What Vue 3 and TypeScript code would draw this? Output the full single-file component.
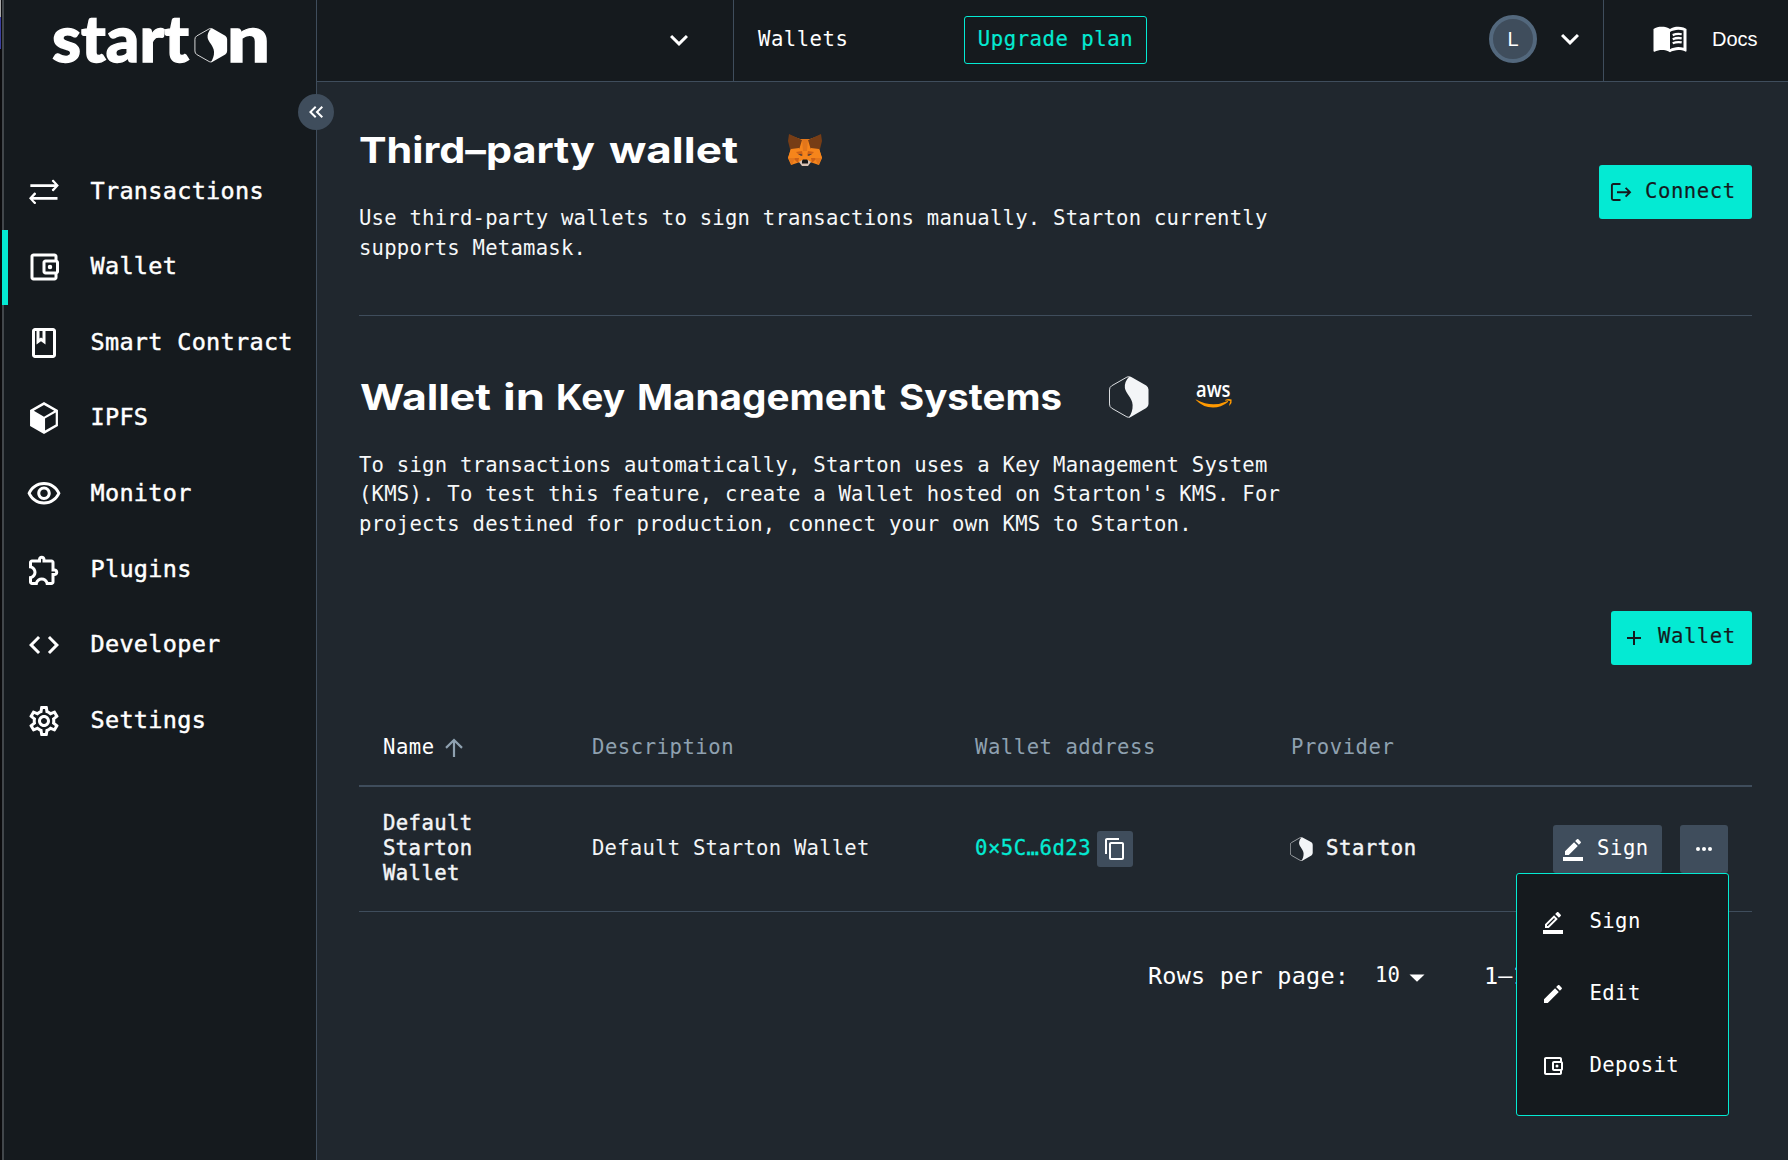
<script setup lang="ts">
interface NavItem {
  label: string
  paths: string[]
  active?: boolean
}

interface Word {
  text: string
  x: number
  width: number
}

const walletPath =
  'M21 7.28V5c0-1.1-.9-2-2-2H5c-1.11 0-2 .9-2 2v14c0 1.1.89 2 2 2h14c1.1 0 2-.9 2-2v-2.28c.59-.35 1-.98 1-1.72V9c0-.74-.41-1.37-1-1.72zM20 9v6h-7V9h7zM5 19V5h14v2h-6c-1.1 0-2 .9-2 2v6c0 1.1.9 2 2 2h6v2H5z'
const walletDot = 'M16 10.5a1.5 1.5 0 1 0 0 3a1.5 1.5 0 1 0 0-3z'

const nav: NavItem[] = [
  {
    label: 'Transactions',
    paths: [
      'M2.9 6.8H19.2L17.2 4.9Q17.1 3.6 18.4 3.9L21.9 7.7L18.4 11.5Q17.1 11.7 17.2 10.4L19 8.6H2.9z',
      'M21 17.1H4.7L6.7 19Q6.8 20.3 5.5 20L2 16.2L5.5 12.4Q6.8 12.2 6.7 13.5L4.9 15.3H21z',
    ],
  },
  { label: 'Wallet', active: true, paths: [walletPath, walletDot] },
  {
    label: 'Smart Contract',
    paths: [
      'M18 2H6c-1.1 0-2 .9-2 2v16c0 1.1.9 2 2 2h12c1.1 0 2-.9 2-2V4c0-1.1-.9-2-2-2zM9 4h2v5l-1-.75L9 9V4zm9 16H6V4h1v9l3-2.25L13 13V4h5v16z',
    ],
  },
  {
    label: 'IPFS',
    paths: [
      'M12 1.4L21.3 6.7V17.3L12 22.6L2.7 17.3V6.7zM12 3.3L5.2 7.1L12 11.1L18.8 7.1zM12.7 12.4V20.4L19.8 16.4V8.4z',
    ],
  },
  {
    label: 'Monitor',
    paths: [
      'M12 6c3.79 0 7.17 2.13 8.82 5.5C19.17 14.87 15.79 17 12 17s-7.17-2.13-8.82-5.5C4.83 8.13 8.21 6 12 6m0-2C7 4 2.73 7.11 1 11.5 2.73 15.89 7 19 12 19s9.27-3.11 11-7.5C21.27 7.11 17 4 12 4zm0 5c1.38 0 2.5 1.12 2.5 2.5S13.38 14 12 14s-2.5-1.12-2.5-2.5S10.62 9 12 9m0-2c-2.48 0-4.5 2.02-4.5 4.5S9.52 16 12 16s4.5-2.02 4.5-4.5S14.48 7 12 7z',
    ],
  },
  {
    label: 'Plugins',
    paths: [
      'M10.5 4.5c.28 0 .5.22.5.5v2h6v6h2c.28 0 .5.22.5.5s-.22.5-.5.5h-2v6h-2.12c-.68-1.75-2.39-3-4.38-3s-3.7 1.25-4.38 3H4v-2.12c1.75-.68 3-2.39 3-4.38 0-1.99-1.24-3.7-2.99-4.38L4 7h6V5c0-.28.22-.5.5-.5m0-2C9.12 2.5 8 3.62 8 5H4c-1.1 0-1.99.9-1.99 2v3.8h.29c1.49 0 2.7 1.21 2.7 2.7s-1.21 2.7-2.7 2.7H2V20c0 1.1.9 2 2 2h3.8v-.3c0-1.49 1.21-2.7 2.7-2.7s2.7 1.21 2.7 2.7v.3H17c1.1 0 2-.9 2-2v-4c1.38 0 2.5-1.12 2.5-2.5S20.38 11 19 11V7c0-1.1-.9-2-2-2h-4c0-1.38-1.12-2.5-2.5-2.5z',
    ],
  },
  {
    label: 'Developer',
    paths: [
      'M9.4 16.6L4.8 12l4.6-4.6L8 6l-6 6 6 6 1.4-1.4zm5.2 0l4.6-4.6-4.6-4.6L16 6l6 6-6 6-1.4-1.4z',
    ],
  },
  {
    label: 'Settings',
    paths: [
      'M19.43 12.98c.04-.32.07-.64.07-.98 0-.34-.03-.66-.07-.98l2.11-1.65c.19-.15.24-.42.12-.64l-2-3.46c-.09-.16-.26-.25-.44-.25-.06 0-.12.01-.17.03l-2.49 1c-.52-.4-1.08-.73-1.69-.98l-.38-2.65C14.46 2.18 14.25 2 14 2h-4c-.25 0-.46.18-.49.42l-.38 2.65c-.61.25-1.17.59-1.69.98l-2.49-1c-.06-.02-.12-.03-.18-.03-.17 0-.34.09-.43.25l-2 3.46c-.13.22-.07.49.12.64l2.11 1.65c-.04.32-.07.65-.07.98 0 .33.03.66.07.98l-2.11 1.65c-.19.15-.24.42-.12.64l2 3.46c.09.16.26.25.44.25.06 0 .12-.01.17-.03l2.49-1c.52.4 1.08.73 1.69.98l.38 2.65c.03.24.24.42.49.42h4c.25 0 .46-.18.49-.42l.38-2.65c.61-.25 1.17-.59 1.69-.98l2.49 1c.06.02.12.03.18.03.17 0 .34-.09.43-.25l2-3.46c.12-.22.07-.49-.12-.64l-2.11-1.65zm-1.98-1.71c.04.31.05.52.05.73 0 .21-.02.43-.05.73l-.14 1.13.89.7 1.08.84-.7 1.21-1.27-.51-1.04-.42-.9.68c-.43.32-.84.56-1.25.73l-1.06.43-.16 1.13-.2 1.35h-1.4l-.19-1.35-.16-1.13-1.06-.43c-.43-.18-.83-.41-1.23-.71l-.91-.7-1.06.43-1.27.51-.7-1.21 1.08-.84.89-.7-.14-1.13c-.03-.31-.05-.54-.05-.74s.02-.43.05-.73l.14-1.13-.89-.7-1.08-.84.7-1.21 1.27.51 1.04.42.9-.68c.43-.32.84-.56 1.25-.73l1.06-.43.16-1.13.2-1.35h1.39l.19 1.35.16 1.13 1.06.43c.43.18.83.41 1.23.71l.91.7 1.06-.43 1.27-.51.7 1.21-1.07.85-.89.7.14 1.13zM12 8c-2.21 0-4 1.79-4 4s1.79 4 4 4 4-1.79 4-4-1.79-4-4-4zm0 6c-1.1 0-2-.9-2-2s.9-2 2-2 2 .9 2 2-.9 2-2 2z',
    ],
  },
]

const menu: NavItem[] = [
  {
    label: 'Sign',
    paths: [
      'M16.81 8.94l-3.75-3.75L4 14.25V18h3.75l9.06-9.06zM6 16v-.92l7.06-7.06.92.92L6.92 16H6zM19.71 6.04c.39-.39.39-1.02 0-1.41l-2.34-2.34c-.39-.39-1.02-.39-1.41 0l-1.83 1.83 3.75 3.75 1.83-1.83zM2 20h20v4H2z',
    ],
  },
  {
    label: 'Edit',
    paths: [
      'M3 17.25V21h3.75L17.81 9.94l-3.75-3.75L3 17.25zM20.71 7.04c.39-.39.39-1.02 0-1.41l-2.34-2.34c-.39-.39-1.02-.39-1.41 0l-1.83 1.83 3.75 3.75 1.83-1.83z',
    ],
  },
  { label: 'Deposit', paths: [walletPath, walletDot] },
]

// Wide display headings: each word is stretched to its own width.
const thirdParty: Word[] = [
  { text: 'Third–party', x: 0, width: 236 },
  { text: 'wallet', x: 250, width: 129 },
]
const kms: Word[] = [
  { text: 'Wallet', x: 1, width: 131 },
  { text: 'in', x: 144, width: 42 },
  { text: 'Key', x: 197, width: 69 },
  { text: 'Management', x: 278, width: 249 },
  { text: 'Systems', x: 540, width: 163 },
]

const hexFill =
  'M20.5 .4C17 4 15.5 8 16 12C16.6 17 23.5 22 23.8 29C24 34 22.5 38 20 41.7L21.5 41.4L37.5 32.2Q39.8 30.6 39.8 28V13.5Q39.6 10.8 37.5 9.3L22 .7Q21.2 .3 20.5 .4z'
const hexLine =
  'M20.5 .7Q19.5 .3 18 1L2.7 9.7Q.5 11 .5 13.8V28Q.5 30.9 2.7 32.3L18 41Q19.5 41.7 21 41.2'
const chevron = 'M16.59 8.59 12 13.17 7.41 8.59 6 10l6 6 6-6z'
</script>

<template>
  <div class="page">
    <div class="edge"><i class="edge-light"></i><i class="edge-blue"></i></div>
    <aside class="sidebar">
      <svg class="logo" width="230" height="92" viewBox="0 0 230 92" role="img" aria-label="starton">
        <text x="0" y="62" textLength="137" lengthAdjust="spacingAndGlyphs">start</text>
        <g transform="translate(142.5 28) scale(.82)">
          <path :d="hexFill" fill="#fff" />
          <path :d="hexLine" fill="none" stroke="#fff" stroke-width="1" />
        </g>
        <text x="175" y="62" textLength="43" lengthAdjust="spacingAndGlyphs">n</text>
      </svg>
      <button class="collapse" aria-label="Collapse">
        <svg width="24" height="24" viewBox="0 0 24 24">
          <path d="M17.59 18 19 16.59 14.42 12 19 7.41 17.59 6l-6 6zM11 18l1.41-1.41L7.83 12l4.58-4.59L11 6l-6 6z" />
        </svg>
      </button>
      <nav>
        <a v-for="item in nav" :key="item.label" class="nav-item" :class="{ active: item.active }">
          <svg width="36" height="36" viewBox="0 0 24 24">
            <path v-for="p in item.paths" :key="p" :d="p" fill-rule="evenodd" />
          </svg>
          <span>{{ item.label }}</span>
        </a>
      </nav>
    </aside>

    <div class="content">
      <header class="topbar">
        <div class="project">
          <svg width="36" height="36" viewBox="0 0 24 24"><path :d="chevron" /></svg>
        </div>
        <div class="crumbs">
          <span class="crumb">Wallets</span>
          <button class="upgrade">Upgrade plan</button>
          <div class="user">
            <span class="avatar">L</span>
            <svg width="36" height="36" viewBox="0 0 24 24"><path :d="chevron" /></svg>
          </div>
        </div>
        <a class="docs">
          <svg width="36" height="36" viewBox="0 0 24 24">
            <path
              fill-rule="evenodd"
              d="M21 5c-1.11-.35-2.33-.5-3.5-.5-1.95 0-4.05.4-5.5 1.5-1.45-1.1-3.55-1.5-5.5-1.5S2.45 4.9 1 6v14.65c0 .25.25.5.5.5.1 0 .15-.05.25-.05C3.1 20.45 5.05 20 6.5 20c1.95 0 4.05.4 5.5 1.5 1.35-.85 3.8-1.5 5.5-1.5 1.65 0 3.35.3 4.75 1.05.1.05.15.05.25.05.25 0 .5-.25.5-.5V6c-.6-.45-1.25-.75-2-1zm0 13.5c-1.1-.35-2.3-.5-3.5-.5-1.7 0-4.15.65-5.5 1.5V8c1.35-.85 3.8-1.5 5.5-1.5 1.2 0 2.4.15 3.5.5v11.5z"
            />
            <path
              fill="none"
              stroke="#fff"
              stroke-width="1.5"
              d="M13.8 10.1q2.8-1.2 6-.6M13.8 12.8q2.8-1.2 6-.6M13.8 15.5q2.8-1.2 6-.6"
            />
          </svg>
          <span>Docs</span>
        </a>
      </header>

      <main>
        <section class="intro">
          <div>
            <div class="title">
              <svg class="heading" width="380" height="48" role="heading" aria-level="1">
                <text
                  v-for="w in thirdParty"
                  :key="w.text"
                  :x="w.x"
                  y="38"
                  :textLength="w.width"
                  lengthAdjust="spacingAndGlyphs"
                >{{ w.text }}</text>
              </svg>
              <svg class="fox" width="34" height="32" viewBox="0 0 34 32">
                <path fill="#f6851b" d="M1 1L12 5H22L33 1L31 14L34 24L31 31L22 28H12L3 31L0 24L3 14z" />
                <path fill="#763d16" d="M1 0L14 6L11 16L2 15L0 7zM33 0L20 6L23 16L32 15L34 7z" />
                <path fill="#e2761b" d="M14 5H20L19 17H15z" />
                <path fill="#f6851b" d="M3 15L11 14L14 17L10 24H0zM31 15L23 14L20 17L24 24H34z" />
                <path fill="#cd6116" d="M8 18L14 17L15 22L10 20zM26 18L20 17L19 22L24 20zM5 24H11L10 29zM29 24H23L24 29z" />
                <path fill="#e4761b" d="M0 24H7L4 31zM34 24H27L30 31z" />
                <path fill="#233447" d="M10 20L14 20.5L13.5 22zM24 20L20 20.5L20.5 22z" />
                <path fill="#d7c1b3" d="M11 28L14 26H20L23 28L20 32H14z" />
                <path fill="#161616" d="M14 26.5L15 25.5H19L20 26.5V29.5H14z" />
              </svg>
            </div>
            <p>
              Use third-party wallets to sign transactions manually. Starton currently<br />supports
              Metamask.
            </p>
          </div>
          <button class="primary connect">
            <svg width="22" height="20" viewBox="0 0 22 20">
              <path
                d="M10.5 2H3.4Q1.9 2 1.9 3.5V16.5Q1.9 18 3.4 18H10.5M7 10.2H19.6M15.6 5.8L20 10.2L15.6 14.6"
                fill="none"
                stroke="#151a1e"
                stroke-width="1.9"
              />
            </svg>
            <span>Connect</span>
          </button>
        </section>

        <section class="kms">
          <div class="title">
            <svg class="heading" width="704" height="48" role="heading" aria-level="1">
              <text
                v-for="w in kms"
                :key="w.text"
                :x="w.x"
                y="37.5"
                :textLength="w.width"
                lengthAdjust="spacingAndGlyphs"
              >{{ w.text }}</text>
            </svg>
            <svg class="hex" width="40" height="42" viewBox="0 0 40.3 42">
              <path :d="hexFill" fill="#f3f5f7" />
              <path :d="hexLine" fill="none" stroke="#f3f5f7" stroke-width=".9" />
            </svg>
            <svg class="aws" width="38" height="46" viewBox="0 -10 38 46">
              <text x="1" y="13.5" textLength="34.5" lengthAdjust="spacingAndGlyphs">aws</text>
              <path
                fill="#ff9900"
                d="M.6 16.8Q.8 16.2 1.5 16.7Q17 25 32 18.2Q33.4 17.8 33 19Q26 24.6 18 24.6Q8 24.6 .6 16.8z"
              />
              <path fill="#ff9900" d="M30 17.1Q33 15.4 36.6 16.5Q37.4 19.6 34.6 22.6Q34 22.8 34.1 22.2L35.3 18Q33 17.4 30.4 17.7z" />
            </svg>
          </div>
          <p>
            To sign transactions automatically, Starton uses a Key Management System<br />(KMS). To
            test this feature, create a Wallet hosted on Starton's KMS. For<br />projects destined
            for production, connect your own KMS to Starton.
          </p>
          <div class="toolbar">
            <button class="primary add">
              <svg width="24" height="24" viewBox="0 0 24 24"><path d="M19 13h-6v6h-2v-6H5v-2h6V5h2v6h6v2z" /></svg>
              <span>Wallet</span>
            </button>
          </div>
        </section>

        <div class="table">
          <div class="row head">
            <span class="sorted">
              Name
              <svg width="20" height="20" viewBox="0 0 20 20">
                <path d="M10 19V2.5M2 9.9L10 2L18 9.9" fill="none" stroke="#8fa1b0" stroke-width="2.2" />
              </svg>
            </span>
            <span>Description</span>
            <span>Wallet address</span>
            <span>Provider</span>
          </div>
          <div class="row item">
            <strong class="name">Default Starton Wallet</strong>
            <span class="desc">Default Starton Wallet</span>
            <span class="address">
              <a>0×5C…6d23</a>
              <button class="copy" aria-label="Copy">
                <svg width="24" height="24" viewBox="0 0 24 24">
                  <path
                    d="M16 1H4c-1.1 0-2 .9-2 2v14h2V3h12V1zm3 4H8c-1.1 0-2 .9-2 2v14c0 1.1.9 2 2 2h11c1.1 0 2-.9 2-2V7c0-1.1-.9-2-2-2zm0 16H8V7h11v14z"
                  />
                </svg>
              </button>
            </span>
            <span class="provider">
              <svg width="23" height="24" viewBox="0 0 40.3 42">
                <path :d="hexFill" fill="#f3f5f7" />
                <path :d="hexLine" fill="none" stroke="#f3f5f7" stroke-width="1" />
              </svg>
              <strong>Starton</strong>
            </span>
            <div class="actions">
              <button class="sign">
                <svg width="24" height="24" viewBox="0 0 24 24">
                  <path
                    d="M22 24H2v-4h20v4zM13.06 5.19l3.75 3.75L7.75 18H4v-3.75l9.06-9.06zm4.82 2.68-3.75-3.75 1.83-1.83c.39-.39 1.02-.39 1.41 0l2.34 2.34c.39.39.39 1.02 0 1.41l-1.83 1.83z"
                  />
                </svg>
                Sign
              </button>
              <button class="more" aria-label="More">
                <svg width="24" height="24" viewBox="0 0 24 24">
                  <circle cx="6" cy="12" r="2" />
                  <circle cx="12" cy="12" r="2" />
                  <circle cx="18" cy="12" r="2" />
                </svg>
              </button>
              <div class="menu">
                <a v-for="m in menu" :key="m.label" class="menu-item">
                  <svg width="24" height="24" viewBox="0 0 24 24">
                    <path v-for="p in m.paths" :key="p" :d="p" fill-rule="evenodd" />
                  </svg>
                  <span>{{ m.label }}</span>
                </a>
              </div>
            </div>
          </div>
        </div>

        <footer class="pagination">
          <span class="rows-label">Rows per page:</span>
          <span class="rows-count">10</span>
          <svg width="16" height="8" viewBox="0 0 16 8"><path d="M.5 .5H15.5L8 7.8z" /></svg>
          <span class="range">1–1</span>
        </footer>
      </main>
    </div>
  </div>
</template>

<style>
body {
  background: #20272e;
  overflow: hidden;
}
</style>

<style scoped>
* {
  box-sizing: border-box;
}
.page {
  display: flex;
  width: 1788px;
  height: 1160px;
  overflow: hidden;
  background: #20272e;
  color: #fff;
  font-family: "DejaVu Sans Mono", "Liberation Mono", monospace;
  font-size: 20.6px;
  letter-spacing: 0.22px;
}
svg {
  display: block;
  flex: none;
  fill: #fff;
}
button {
  display: flex;
  align-items: center;
  padding: 0;
  border: 0;
  border-radius: 3px;
  background: #3f4d5c;
  color: #fff;
  font: inherit;
  letter-spacing: 0.54px;
}
p {
  margin: 0;
  line-height: 29.3px;
  color: #f6f8f9;
}
.edge {
  width: 4px;
  flex: none;
  background: #0b0b0d;
  border-right: 2px solid #42474b;
}
.edge i {
  display: block;
  width: 1px;
}
.edge-light {
  height: 17px;
  background: #a9a9a9;
}
.edge-blue {
  height: 32px;
  background: #3c3f9f;
}
.sidebar {
  position: relative;
  width: 313px;
  flex: none;
  background: #151a1e;
  border-right: 1px solid #3f4d5c;
}
.logo {
  margin-left: 48px;
}
.logo text {
  font: 900 64px Lato, sans-serif;
  letter-spacing: 0;
  stroke: #fff;
  stroke-width: 1.3px;
}
.collapse {
  position: absolute;
  top: 94px;
  right: -18px;
  z-index: 2;
  width: 36px;
  height: 36px;
  justify-content: center;
  border-radius: 50%;
}
nav {
  margin-top: 62.3px;
}
.nav-item {
  position: relative;
  display: flex;
  align-items: center;
  gap: 28.5px;
  height: 75.6px;
  padding-left: 22px;
  font-size: 23.5px;
  letter-spacing: 0.3px;
  -webkit-text-stroke: 0.45px #fff;
}
.nav-item svg {
  margin-top: -1px;
}
.nav-item span {
  margin-top: -3px;
}
.nav-item.active::before {
  content: "";
  position: absolute;
  left: -2px;
  top: 0;
  width: 6px;
  height: 75px;
  background: #04ead3;
}
.content {
  flex: 1;
}
.topbar {
  display: flex;
  height: 82px;
  background: #151a1e;
  border-bottom: 1px solid #3f4d5c;
}
.project,
.crumbs {
  display: flex;
  border-right: 1px solid #3f4d5c;
}
.project {
  width: 417px;
  justify-content: flex-end;
  padding: 22px 36px 0 0;
}
.crumbs {
  width: 870px;
  padding: 15px 15px 0 24px;
}
.crumb {
  line-height: 48px;
  width: 206px;
  letter-spacing: 0.5px;
}
.upgrade {
  width: 183px;
  height: 48px;
  margin-top: 1px;
  justify-content: center;
  border: 1px solid #04ead3;
  background: transparent;
  color: #04ead3;
  padding-bottom: 2px;
  -webkit-text-stroke: 0.2px #04ead3;
}
.user {
  display: flex;
  align-items: center;
  gap: 15px;
  height: 48px;
  margin-left: auto;
}
.avatar {
  width: 48px;
  height: 48px;
  border: 4px solid #53687d;
  border-radius: 50%;
  background: #3f4d5c;
  font: 20px/40px "Liberation Sans", Arial, sans-serif;
  letter-spacing: 0;
  text-align: center;
}
.docs {
  display: flex;
  gap: 24px;
  padding: 21px 0 0 48px;
  font: 20px/36px "Liberation Sans", Arial, sans-serif;
  letter-spacing: 0;
}
.docs svg {
  margin-top: -1px;
}
main {
  padding: 43px 36px 0 42px;
}
.title {
  display: flex;
  align-items: center;
  height: 48px;
}
.heading text {
  font: 700 36px Inter, sans-serif;
  letter-spacing: 0;
}
.fox {
  margin: 2px 0 0 49px;
}
.intro {
  display: flex;
  justify-content: space-between;
  height: 191px;
  border-bottom: 1px solid #3f4d5c;
}
.intro p {
  margin-top: 31.4px;
}
.primary {
  height: 54px;
  background: #04ead3;
  color: #151a1e;
  padding-bottom: 1px;
  -webkit-text-stroke: 0.2px #151a1e;
}
.primary svg {
  fill: #151a1e;
  margin-top: 1px;
}
.primary span {
  margin-top: -2px;
}
.connect {
  width: 153px;
  margin-top: 40px;
  padding-left: 11px;
  gap: 13px;
}
.kms {
  padding-top: 56px;
}
.kms p {
  margin-top: 31px;
}
.hex {
  margin: 2px 0 0 46px;
}
.aws {
  margin: 0 0 0 46px;
}
.aws text {
  font: 600 21px "Open Sans", sans-serif;
  letter-spacing: 0;
}
.toolbar {
  display: flex;
  justify-content: flex-end;
  margin-top: 72.1px;
}
.add {
  width: 141px;
  padding-left: 11px;
  gap: 12px;
}
.table {
  margin-top: 44px;
}
.row {
  display: grid;
  grid-template-columns: 209px 383px 316px 1fr;
  align-items: center;
  padding-left: 24px;
}
.head {
  height: 78px;
  border-bottom: 2px solid #3f4d5c;
  color: #8fa1b0;
  letter-spacing: 0.52px;
}
.sorted {
  display: flex;
  align-items: center;
  gap: 9px;
  color: #fff;
}
.sorted svg {
  margin-top: 2px;
}
.item {
  grid-template-columns: 209px 383px 315px 244px 1fr;
  height: 125px;
  border-bottom: 1px solid #3f4d5c;
  color: #f3f5f7;
}
strong {
  font-weight: 400;
  -webkit-text-stroke: 0.45px #f3f5f7;
}
.name {
  width: 130px;
  line-height: 25px;
  letter-spacing: 0.4px;
  margin-top: -1px;
}
.desc {
  margin-top: -2px;
}
.address,
.provider {
  display: flex;
  align-items: center;
}
.address a {
  width: 122px;
  color: #04ead3;
  letter-spacing: 0.5px;
  margin-top: -2px;
  -webkit-text-stroke: 0.3px #04ead3;
}
.copy {
  width: 36px;
  height: 36px;
  justify-content: center;
}
.provider {
  gap: 13px;
}
.provider strong {
  letter-spacing: 0.55px;
  margin-top: -2px;
}
.actions {
  position: relative;
  display: flex;
  gap: 18px;
  width: 194px;
  margin-left: 19px;
}
.sign {
  width: 109px;
  height: 48px;
  padding-left: 8px;
  gap: 12px;
  padding-bottom: 2px;
}
.sign svg {
  margin-top: 2px;
}
.more {
  width: 48px;
  height: 48px;
  justify-content: center;
}
.menu {
  position: absolute;
  top: 48px;
  left: -37px;
  width: 213px;
  height: 243px;
  padding: 12px 0;
  border: 1px solid #04ead3;
  border-radius: 3px;
  background: #151a1e;
  color: #fff;
}
.menu-item {
  display: flex;
  align-items: center;
  gap: 24.5px;
  height: 72px;
  padding-left: 24px;
  letter-spacing: 0.4px;
}
.menu-item span {
  margin-top: -2px;
}
.pagination {
  display: flex;
  align-items: center;
  height: 52px;
  margin: 38px 0 0 789px;
}
.rows-label,
.range {
  font-size: 23.5px;
}
.rows-label {
  width: 227px;
}
.rows-count {
  width: 34px;
  margin-top: -1px;
}
.pagination svg {
  margin-top: 4px;
}
.range {
  margin-left: 59px;
}
</style>
